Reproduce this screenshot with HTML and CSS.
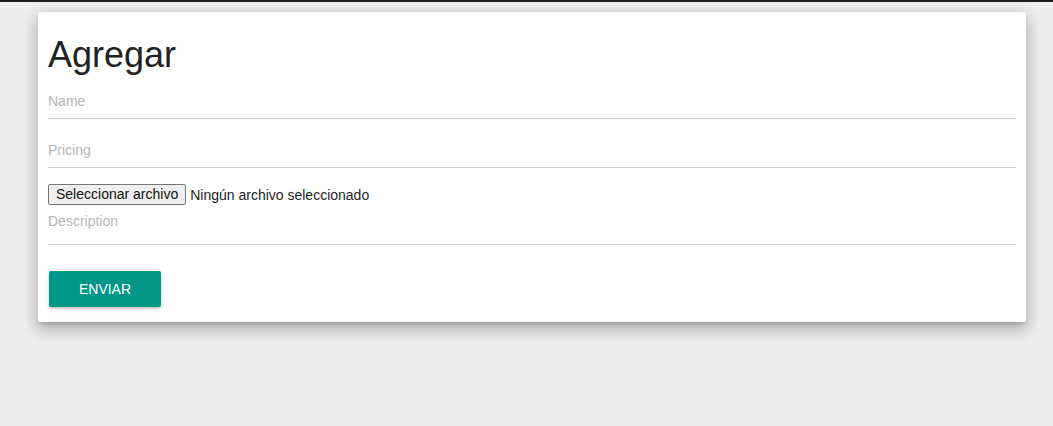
FILE: index.html
```html
<!DOCTYPE html>
<html lang="es">
<head>
    <meta charset="UTF-8">
    <meta name="viewport" content="width=device-width, initial-scale=1.0">
    <title>Agregar producto</title>
    <link rel="stylesheet" href="styles.css">
</head>
<body>

    <div class="page">
        <div class="card">
            <h1>Agregar</h1>

            <form class="product-form">
                <input class="field" type="text" name="name" placeholder="Name">
                <input class="field field-gap" type="text" name="pricing" placeholder="Pricing">

                <div class="file-row">
                    <label class="file-btn">
                        Seleccionar archivo
                        <input type="file" name="image" hidden>
                    </label>
                    <span class="file-name">Ningún archivo seleccionado</span>
                </div>

                <textarea class="field area" name="description" placeholder="Description"></textarea>

                <button class="btn" type="submit">Enviar</button>
            </form>
        </div>
    </div>

</body>
</html>
```

FILE: styles.css
```css
* {
    margin: 0;
    padding: 0;
    box-sizing: border-box;
}

body {
    font-family: 'Liberation Sans', Arial, sans-serif;
    background-color: #eeeeee;
    color: #222;
    border-top: 2px solid #1c1c1c;
}

.page {
    padding: 10px 27px 40px 38px;
}

.card {
    background-color: #fff;
    border-radius: 2px;
    padding: 10px 10px 15px;
    box-shadow: 0 8px 17px 2px rgba(0, 0, 0, 0.14),
                0 3px 14px 2px rgba(0, 0, 0, 0.12),
                0 5px 5px -3px rgba(0, 0, 0, 0.2);
}

h1 {
    font-size: 36px;
    font-weight: 400;
    line-height: 36px;
    color: #222;
    margin-top: 15px;
}

.product-form {
    display: flex;
    flex-direction: column;
    align-items: flex-start;
    margin-top: 15px;
}

.field {
    display: block;
    width: 100%;
    height: 31px;
    padding: 0 0 5px;
    border: none;
    border-bottom: 1px solid #cfcfcf;
    font-family: 'Liberation Sans', Arial, sans-serif;
    font-size: 14px;
    color: #222;
    background: transparent;
    outline: none;
}

.field::placeholder {
    color: #b5b5b5;
}

.field-gap {
    margin-top: 18px;
}

.file-row {
    display: flex;
    align-items: center;
    gap: 4px;
    margin-top: 16px;
    font-size: 14px;
}

.file-btn {
    display: inline-block;
    height: 21px;
    line-height: 19px;
    padding: 0 7px;
    background-color: #efefef;
    border: 1px solid #767676;
    border-radius: 2px;
    color: #111;
    cursor: pointer;
}

.file-name {
    color: #222;
}

.area {
    height: 32px;
    padding: 0;
    margin-top: 8px;
    resize: none;
    overflow: hidden;
}

.btn {
    margin-top: 26px;
    margin-left: 1px;
    width: 112px;
    height: 36px;
    border: none;
    border-radius: 2px;
    background-color: #009688;
    color: #fff;
    font-family: 'Liberation Sans', Arial, sans-serif;
    font-size: 14px;
    text-transform: uppercase;
    box-shadow: 0 2px 2px 0 rgba(0, 0, 0, 0.14),
                0 1px 5px 0 rgba(0, 0, 0, 0.12);
    cursor: pointer;
}
```
